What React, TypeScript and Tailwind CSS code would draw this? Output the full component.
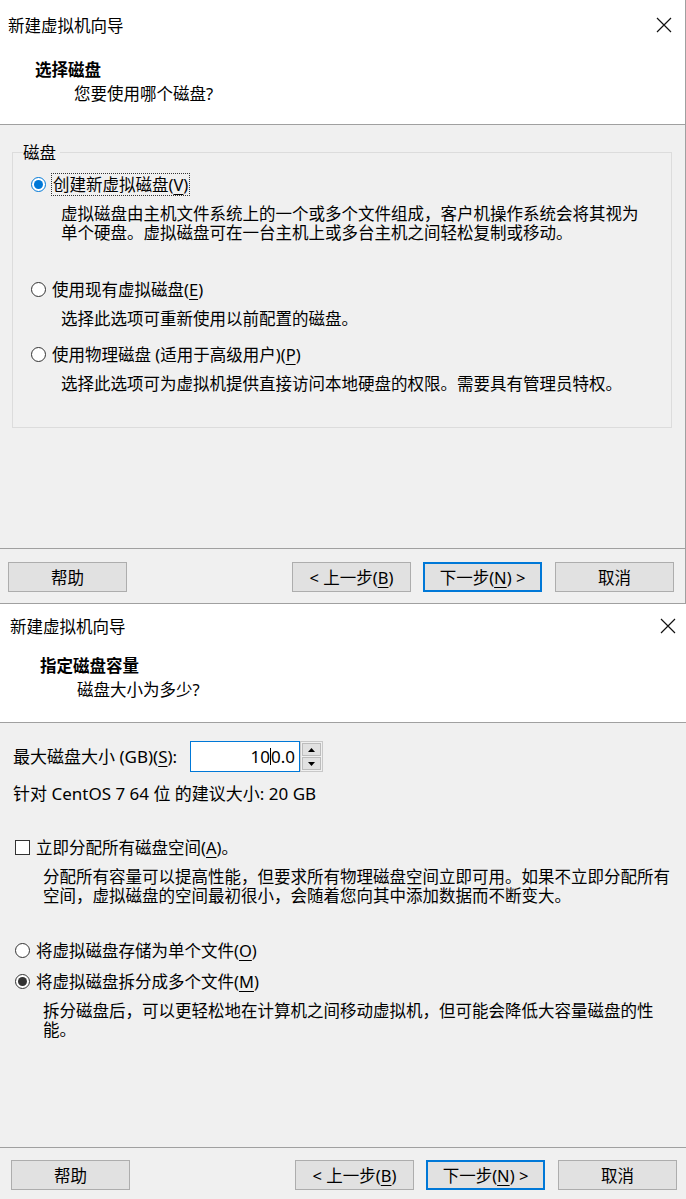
import { ReactNode } from 'react';

function CloseIcon() {
  return (
    <svg width="16" height="16" viewBox="0 0 16 16" className="shrink-0">
      <path d="M1 1L15 15M15 1L1 15" stroke="#111" strokeWidth="1.2" fill="none" />
    </svg>
  );
}

function Key({ children }: { children: ReactNode }) {
  return <span className="underline underline-offset-[3px] decoration-1">{children}</span>;
}

function Radio({ checked, focus }: { checked?: boolean; focus?: boolean }) {
  return (
    <span
      className={`w-[15px] h-[15px] rounded-full border bg-white flex items-center justify-center shrink-0 ${
        focus ? 'border-[#0078d7]' : 'border-[#333333]'
      }`}
    >
      {checked && (
        <span className={`w-[9px] h-[9px] rounded-full ${focus ? 'bg-[#0078d7]' : 'bg-[#333333]'}`} />
      )}
    </span>
  );
}

function Btn({ children, primary }: { children: ReactNode; primary?: boolean }) {
  return (
    <div
      className={`w-[119px] h-[30px] flex items-center justify-center bg-[#e1e1e1] ${
        primary ? 'border-2 border-[#0078d7]' : 'border border-[#adadad]'
      }`}
    >
      {children}
    </div>
  );
}

function Footer({ h, pt, pl, pr }: { h: string; pt: string; pl: string; pr: string }) {
  return (
    <div className={`flex items-start border-t border-[#a0a0a0] bg-[#f0f0f0] ${h} ${pt} ${pl} ${pr}`}>
      <Btn>帮助</Btn>
      <div className="flex-1" />
      <div className="flex gap-3">
        <Btn>
          &lt; 上一步(<Key>B</Key>)
        </Btn>
        <Btn primary>
          下一步(<Key>N</Key>) &gt;
        </Btn>
        <div className="ml-px">
          <Btn>取消</Btn>
        </div>
      </div>
    </div>
  );
}

function ChooseDisk() {
  return (
    <div className="h-[604px] flex flex-col border-r border-b border-[#a0a0a0] bg-white">
      {/* title bar */}
      <div className="h-[50px] flex items-center justify-between pl-2 pr-[13px]">
        <span>新建虚拟机向导</span>
        <CloseIcon />
      </div>

      {/* header */}
      <div className="h-[74px] pt-2 pl-[35px] leading-6">
        <div className="font-bold">选择磁盘</div>
        <div className="pl-[39px]">您要使用哪个磁盘?</div>
      </div>

      {/* body */}
      <div className="flex-1 border-t border-[#a0a0a0] bg-[#f0f0f0] pt-[18px] pl-3 pr-[13px]">
        <fieldset className="border border-[#dcdcdc] px-[10px] pb-[34px]">
          <legend className="pr-1 leading-[19px]">磁盘</legend>
          <div className="mt-[10px] h-6 flex items-center pl-2 gap-[6px]">
            <Radio checked focus />
            <span className="outline-1 outline-dotted outline-[#333] px-px leading-[21px]">
              创建新虚拟磁盘(<Key>V</Key>)
            </span>
          </div>
          <div className="mt-2 pl-[38px] whitespace-nowrap">
            虚拟磁盘由主机文件系统上的一个或多个文件组成，客户机操作系统会将其视为
            <br />
            单个硬盘。虚拟磁盘可在一台主机上或多台主机之间轻松复制或移动。
          </div>

          <div className="mt-[35px] h-6 flex items-center pl-2 gap-[6px]">
            <Radio />
            <span>
              使用现有虚拟磁盘(<Key>E</Key>)
            </span>
          </div>
          <div className="mt-2 pl-[38px]">选择此选项可重新使用以前配置的磁盘。</div>

          <div className="mt-[14px] h-6 flex items-center pl-2 gap-[6px]">
            <Radio />
            <span>
              使用物理磁盘 (适用于高级用户)(<Key>P</Key>)
            </span>
          </div>
          <div className="mt-2 pl-[38px]">选择此选项可为虚拟机提供直接访问本地硬盘的权限。需要具有管理员特权。</div>
        </fieldset>
      </div>

      <Footer h="h-[55px]" pt="pt-[13px]" pl="pl-2" pr="pr-[11px]" />
    </div>
  );
}

function Spinner() {
  return (
    <div className="w-[23px] h-[31px] flex flex-col border border-[#c8c8c8] bg-[#f0f0f0] p-px gap-px">
      <div className="flex-1 bg-[#e1e1e1] border border-[#bcbcbc] flex items-center justify-center">
        <svg width="7" height="4" viewBox="0 0 7 4">
          <path d="M0 4L3.5 0L7 4Z" fill="#000" />
        </svg>
      </div>
      <div className="flex-1 bg-[#e1e1e1] border border-[#bcbcbc] flex items-center justify-center">
        <svg width="7" height="4" viewBox="0 0 7 4">
          <path d="M0 0L7 0L3.5 4Z" fill="#000" />
        </svg>
      </div>
    </div>
  );
}

function DiskSize() {
  return (
    <div className="h-[595px] flex flex-col bg-white">
      {/* title bar */}
      <div className="h-[44px] flex items-center justify-between pl-[10px] pr-[10px]">
        <span>新建虚拟机向导</span>
        <CloseIcon />
      </div>

      {/* header */}
      <div className="h-[74px] pt-[6px] pl-[40px] leading-6">
        <div className="font-bold">指定磁盘容量</div>
        <div className="pl-[37px]">磁盘大小为多少?</div>
      </div>

      {/* body */}
      <div className="flex-1 border-t border-[#a0a0a0] bg-[#f0f0f0] pt-[18px] pl-[13px]">
        <div className="flex items-center">
          <span className="w-[177px] text-[17px]">
            最大磁盘大小 (GB)(<Key>S</Key>):
          </span>
          <div className="w-[110px] h-[31px] border border-[#0078d7] bg-white flex items-center justify-end pr-1 text-[17px]">
            <span>10</span>
            <span className="inline-block w-px h-[17px] bg-black" />
            <span>0.0</span>
          </div>
          <Spinner />
        </div>
        <div className="mt-3 text-[17px]">针对 CentOS 7 64 位 的建议大小: 20 GB</div>

        <div className="mt-[32px] h-6 flex items-center gap-[6px] pl-[2px]">
          <span className="w-[15px] h-[15px] border border-[#333333] bg-white shrink-0" />
          <span>
            立即分配所有磁盘空间(<Key>A</Key>)。
          </span>
        </div>
        <div className="mt-2 pl-[30px] whitespace-nowrap">
          分配所有容量可以提高性能，但要求所有物理磁盘空间立即可用。如果不立即分配所有
          <br />
          空间，虚拟磁盘的空间最初很小，会随着您向其中添加数据而不断变大。
        </div>

        <div className="mt-[33px] h-6 flex items-center gap-[6px] pl-[2px]">
          <Radio />
          <span>
            将虚拟磁盘存储为单个文件(<Key>O</Key>)
          </span>
        </div>
        <div className="mt-[7px] h-6 flex items-center gap-[6px] pl-[2px]">
          <Radio checked />
          <span>
            将虚拟磁盘拆分成多个文件(<Key>M</Key>)
          </span>
        </div>
        <div className="mt-2 pl-[30px] whitespace-nowrap">
          拆分磁盘后，可以更轻松地在计算机之间移动虚拟机，但可能会降低大容量磁盘的性
          <br />
          能。
        </div>
      </div>

      <Footer h="h-[52px]" pt="pt-3" pl="pl-[11px]" pr="pr-[9px]" />
    </div>
  );
}

export default function App() {
  return (
    <div className="w-[686px] h-[1199px] overflow-hidden bg-white text-black text-[16.5px] leading-[19px] font-['Noto_Sans','Noto_Sans_CJK_SC',sans-serif]">
      <ChooseDisk />
      <DiskSize />
    </div>
  );
}
